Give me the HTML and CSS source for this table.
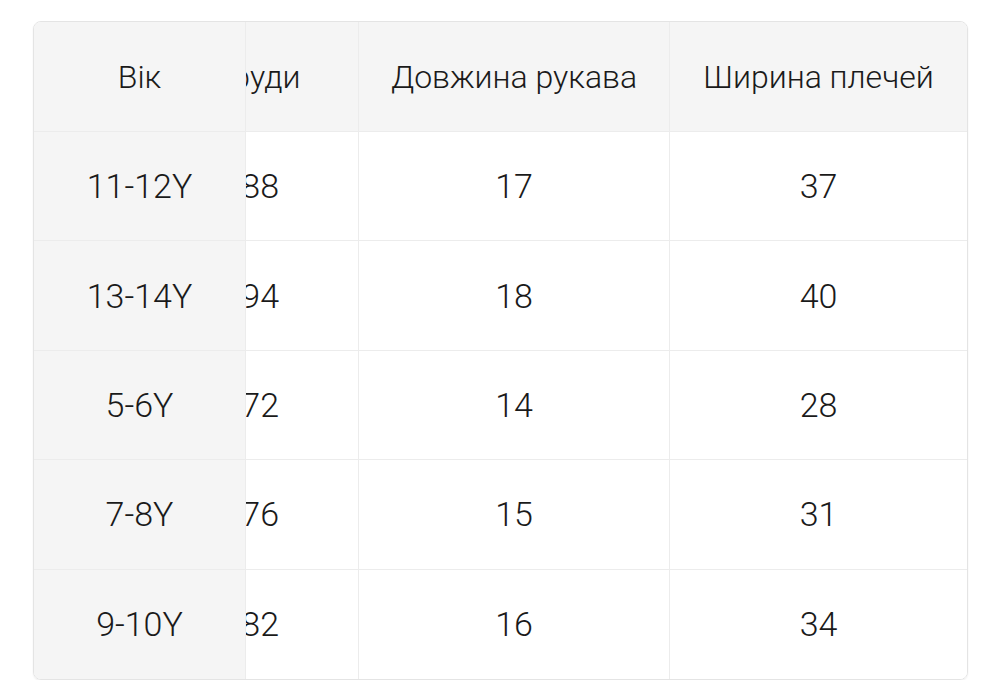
FILE: index.html
```html
<!DOCTYPE html>
<html lang="uk">
<head>
<meta charset="utf-8">
<title>Таблиця розмірів</title>
<link rel="stylesheet" href="styles.css">
</head>
<body>
<div class="page">
  <div class="table-wrap" id="sizes">
    <table class="sizes">
      <colgroup>
        <col class="c-age">
        <col class="c-chest">
        <col class="c-sleeve">
        <col class="c-shoulder">
      </colgroup>
      <thead>
        <tr>
          <th class="sticky">Вік</th>
          <th class="chest-h">Обхват груди</th>
          <th>Довжина рукава</th>
          <th>Ширина плечей</th>
        </tr>
      </thead>
      <tbody>
        <tr><td class="sticky">11-12Y</td><td class="chest">88</td><td>17</td><td>37</td></tr>
        <tr><td class="sticky">13-14Y</td><td class="chest">94</td><td>18</td><td>40</td></tr>
        <tr><td class="sticky">5-6Y</td><td class="chest">72</td><td>14</td><td>28</td></tr>
        <tr><td class="sticky">7-8Y</td><td class="chest">76</td><td>15</td><td>31</td></tr>
        <tr><td class="sticky">9-10Y</td><td class="chest">82</td><td>16</td><td>34</td></tr>
      </tbody>
    </table>
  </div>
</div>
<script src="script.js"></script>
</body>
</html>
```

FILE: styles.css
```css
html, body {
  margin: 0;
  padding: 0;
  background: #ffffff;
}

body {
  font-family: Roboto, "Noto Sans", "Liberation Sans", sans-serif;
  font-weight: 300;
  color: #1a1a1a;
}

.page {
  padding: 21px 33px 0 33px;
}

.table-wrap {
  width: 935px;
  box-sizing: border-box;
  border: 1px solid #e4e4e4;
  border-radius: 8px;
  box-shadow: 0 1px 2px rgba(0, 0, 0, 0.07);
  overflow-x: auto;
  overflow-y: hidden;
  scrollbar-width: none;
}

.table-wrap::-webkit-scrollbar {
  display: none;
}

.sizes {
  border-collapse: separate;
  border-spacing: 0;
  table-layout: fixed;
  width: 1136px;
  line-height: 1;
}

.c-age { width: 212px; }
.c-chest { width: 316px; }
.c-sleeve { width: 311px; }
.c-shoulder { width: 297px; }

.sizes th,
.sizes td {
  padding: 0 32px;
  text-align: center;
  white-space: nowrap;
  font-weight: 300;
  border-bottom: 1px solid #ececec;
  border-right: 1px solid #ececec;
  box-sizing: border-box;
}

.sizes th {
  height: 110px;
  font-size: 32px;
  background: #f5f5f5;
}

.sizes td {
  height: 109.4px;
  font-size: 34px;
  background: #ffffff;
}

.sizes tr > :last-child {
  border-right: none;
}

.sizes tbody tr:last-child td {
  border-bottom: none;
}

.sizes .sticky {
  position: sticky;
  left: 0;
  z-index: 1;
  background: #f5f5f5;
}

.sizes th.chest-h {
  padding-left: 35px;
  padding-right: 29px;
}

.sizes td.chest {
  text-align: right;
  padding-right: 79px;
}
```

FILE: script.js
```js
var wrap = document.getElementById('sizes');
wrap.scrollLeft = wrap.scrollWidth;
```
